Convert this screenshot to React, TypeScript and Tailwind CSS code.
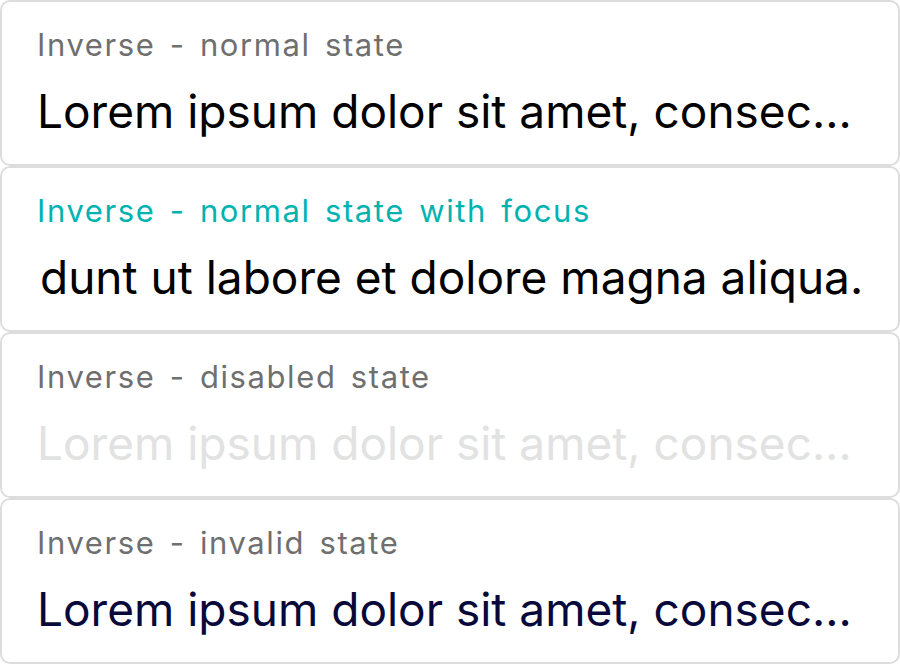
const FONT = { fontFamily: 'Inter, "Noto Sans", sans-serif' }

type Field = {
  label: string
  value: string
  labelCls: string
  valueCls: string
  indent?: string
}

const FIELDS: Field[] = [
  { label: 'Inverse - normal state',            value: 'Lorem ipsum dolor sit amet, consec...',   labelCls: 'text-[#6f6f6f]', valueCls: 'text-black' },
  { label: 'Inverse - normal state with focus', value: 'dunt ut labore et dolore magna aliqua.', labelCls: 'text-[#00b3b0]', valueCls: 'text-black', indent: 'pl-[3px]' },
  { label: 'Inverse - disabled state',          value: 'Lorem ipsum dolor sit amet, consec...',   labelCls: 'text-[#6f6f6f]', valueCls: 'text-[#e2e2e2]' },
  { label: 'Inverse - invalid state',           value: 'Lorem ipsum dolor sit amet, consec...',   labelCls: 'text-[#6f6f6f]', valueCls: 'text-[#08083a]' },
]

export default function App() {
  return (
    <div className="flex h-[664px] w-[900px] flex-col bg-white" style={FONT}>
      {FIELDS.map(f => (
        <div
          key={f.label}
          className="flex h-[166px] flex-col overflow-hidden rounded-[10px] border-2 border-[#dddddd] bg-white pl-[35px] pt-[24px]"
        >
          <p className={`text-[31px] leading-[37px] tracking-[1.6px] [word-spacing:4px] ${f.labelCls}`}>{f.label}</p>
          <p className={`mt-[22px] whitespace-nowrap text-[46px] leading-[52px] ${f.valueCls} ${f.indent ?? ''}`}>
            {f.value}
          </p>
        </div>
      ))}
    </div>
  )
}
